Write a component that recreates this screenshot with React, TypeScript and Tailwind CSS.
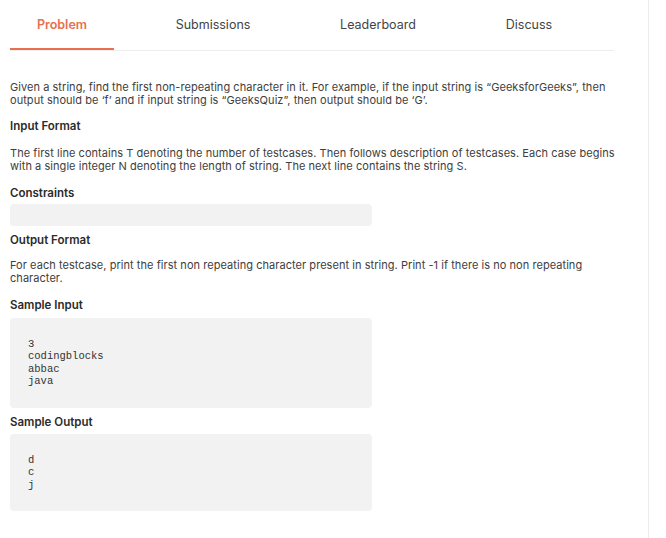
const tabs = [
  { label: "Problem", w: "w-[104px]", active: true },
  { label: "Submissions", w: "w-[198px]", active: false },
  { label: "Leaderboard", w: "w-[132px]", active: false },
  { label: "Discuss", w: "w-[170px]", active: false },
];

function Heading({ children }: { children: string }) {
  return (
    <h3 className="text-[11.5px] font-semibold leading-[14px] text-[#2b2b2b]">
      {children}
    </h3>
  );
}

function Para({ children }: { children: React.ReactNode }) {
  return (
    <p className="whitespace-nowrap text-[11px] leading-[13px] tracking-[0.05px] text-[#404040]">
      {children}
    </p>
  );
}

function CodeBox({ lines, h }: { lines: string[]; h: string }) {
  return (
    <div className={`w-[362px] ${h} rounded bg-[#f2f2f2] px-[18px] pt-[20px]`}>
      <pre className="font-['Liberation_Mono',monospace] text-[10.5px] leading-[12.3px] text-[#333]">
        {lines.join("\n")}
      </pre>
    </div>
  );
}

export default function App() {
  return (
    <div className="flex h-[538px] w-[666px] bg-white font-['Inter',sans-serif]">
      <div className="w-[649px] border-r border-[#ececec] pl-[10px]">
        <div className="flex w-[604px] border-b border-[#ededed] pt-[18px]">
          {tabs.map((t) => (
            <div
              key={t.label}
              className={`${t.w} flex h-[32px] justify-center border-b-2 text-[12.5px] leading-[14px] ${
                t.active
                  ? "border-[#e8704f] font-semibold text-[#e8704f]"
                  : "border-transparent text-[#444]"
              }`}
            >
              {t.label}
            </div>
          ))}
        </div>

        <div className="w-[604px] pt-[30px]">
          <Para>
            Given a string, find the first non-repeating character in it. For
            example, if the input string is “GeeksforGeeks”, then
            <br />
            output should be ‘f’ and if input string is “GeeksQuiz”, then output
            should be ‘G’.
          </Para>

          <div className="mt-[12px]">
            <Heading>Input Format</Heading>
          </div>
          <div className="mt-[14px]">
            <Para>
              The first line contains T denoting the number of testcases. Then
              follows description of testcases. Each case begins
              <br />
              with a single integer N denoting the length of string. The next
              line contains the string S.
            </Para>
          </div>

          <div className="mt-[13px]">
            <Heading>Constraints</Heading>
          </div>
          <div className="mt-[4px] h-[22px] w-[362px] rounded bg-[#f2f2f2]" />

          <div className="mt-[7px]">
            <Heading>Output Format</Heading>
          </div>
          <div className="mt-[12px]">
            <Para>
              For each testcase, print the first non repeating character present
              in string. Print -1 if there is no non repeating
              <br />
              character.
            </Para>
          </div>

          <div className="mt-[13px]">
            <Heading>Sample Input</Heading>
          </div>
          <div className="mt-[6px]">
            <CodeBox lines={["3", "codingblocks", "abbac", "java"]} h="h-[90px]" />
          </div>

          <div className="mt-[7px]">
            <Heading>Sample Output</Heading>
          </div>
          <div className="mt-[5px]">
            <CodeBox lines={["d", "c", "j"]} h="h-[77px]" />
          </div>
        </div>
      </div>
    </div>
  );
}
